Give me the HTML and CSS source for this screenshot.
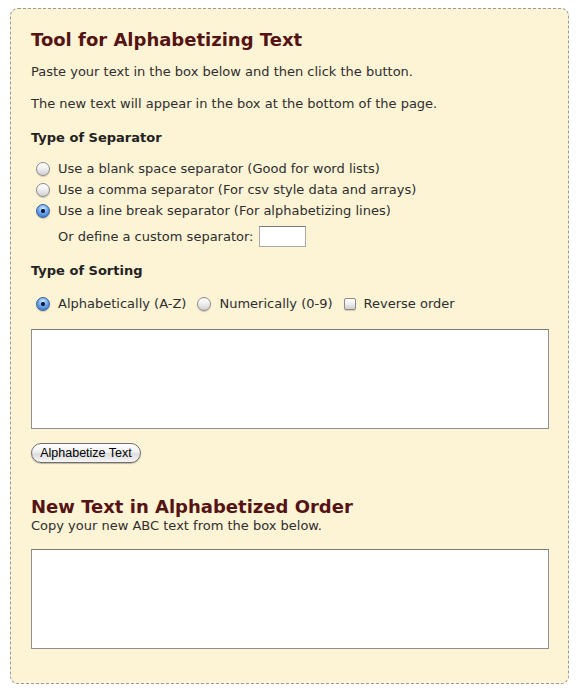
FILE: index.html
```html
<!DOCTYPE html>
<html lang="en">
<head>
    <meta charset="UTF-8">
    <title>Tool for Alphabetizing Text</title>
    <link rel="stylesheet" href="styles.css">
</head>
<body>
    <div class="container">
        <h1>Tool for Alphabetizing Text</h1>
        <p>Paste your text in the box below and then click the button.</p>
        <p>The new text will appear in the box at the bottom of the page.</p>

        <h3 class="first">Type of Separator</h3>
        <div class="options">
            <label class="opt"><input type="radio" name="sep" value="space"> Use a blank space separator (Good for word lists)</label>
            <label class="opt"><input type="radio" name="sep" value="comma"> Use a comma separator (For csv style data and arrays)</label>
            <label class="opt"><input type="radio" name="sep" value="line" checked> Use a line break separator (For alphabetizing lines)</label>
            <div class="custom">Or define a custom separator: <input type="text" class="sep-input"></div>
        </div>

        <h3>Type of Sorting</h3>
        <div class="sorting">
            <label class="opt"><input type="radio" name="sort" value="alpha" checked> Alphabetically (A-Z)</label>
            <label class="opt"><input type="radio" name="sort" value="num"> Numerically (0-9)</label>
            <label class="opt"><input type="checkbox" name="reverse"> Reverse order</label>
        </div>

        <textarea class="box"></textarea>
        <button type="button" class="go">Alphabetize Text</button>

        <h2>New Text in Alphabetized Order</h2>
        <p class="sub">Copy your new ABC text from the box below.</p>
        <textarea class="box"></textarea>
    </div>
</body>
</html>
```

FILE: styles.css
```css
body {
    font-family: "DejaVu Sans", Verdana, sans-serif;
    font-size: 13px;
    line-height: 16px;
    color: #2e2e2e;
    background-color: #ffffff;
    margin: 0;
    padding: 0;
}
.container {
    width: 518px;
    margin: 8px 0 0 10px;
    padding: 20px 19px 34px 20px;
    background: #fdf3d5;
    border: 1px dashed #999999;
    border-radius: 8px;
}
h1, h2 {
    font-size: 18px;
    line-height: 22px;
    color: #551414;
    margin: 0;
}
h1 {
    margin-bottom: 13px;
}
h2 {
    margin-top: 33px;
}
h3 {
    font-size: 13px;
    color: #222222;
    margin: 16px 0 17px;
}
h3.first {
    margin: 18px 0 15px;
}
p {
    margin: 0 0 16px;
}
p.sub {
    margin: 0 0 15px;
}
.options {
    display: flex;
    flex-direction: column;
    gap: 5px;
}
.opt {
    display: flex;
    align-items: center;
    gap: 5px;
}
.opt input {
    margin: 0 3px 0 5px;
}
.custom {
    margin-top: 2px;
    padding-left: 27px;
    display: flex;
    align-items: center;
    gap: 4px;
}
.sep-input {
    box-sizing: border-box;
    width: 47px;
    height: 21px;
    margin: 0 0 0 2px;
    padding: 0;
    border: 1px solid #a8a8a8;
    border-top-color: #7a7a7a;
    background: #ffffff;
}
.sorting {
    display: flex;
    align-items: center;
    gap: 6px;
    margin-bottom: 17px;
}
input[type="radio"], input[type="checkbox"] {
    appearance: none;
    box-sizing: border-box;
    width: 14px;
    height: 14px;
    border: 1px solid #8a8a8a;
    background: linear-gradient(#ffffff, #f2f2f2 40%, #cfcfcf);
    box-shadow: 0 1px 1px rgba(0, 0, 0, 0.18);
}
input[type="radio"] {
    border-radius: 50%;
}
input[type="checkbox"] {
    border-radius: 2px;
    width: 12px;
    height: 12px;
}
input[type="radio"]:checked {
    background: radial-gradient(circle at 50% 50%, #0f1f44 0 1.8px, transparent 2.4px), radial-gradient(circle at 50% 30%, #d8ecff 0, #6fa8ea 45%, #2a64c4 100%);
    border-color: #3660a4;
}
textarea.box {
    display: block;
    box-sizing: border-box;
    width: 518px;
    height: 100px;
    border: 1px solid #8f8f8f;
    border-top-color: #7a7a7a;
    padding: 2px;
    margin: 0;
    background: #ffffff;
    resize: none;
}
.go {
    display: block;
    box-sizing: border-box;
    width: 110px;
    height: 20px;
    margin-top: 14px;
    padding: 0;
    font-family: "Liberation Sans", Arial, sans-serif;
    font-size: 12.5px;
    color: #000000;
    border: 1px solid #6f6f6f;
    border-radius: 10px;
    background: linear-gradient(#ffffff, #f0f0f0 45%, #dcdcdc 55%, #f6f6f6);
    box-shadow: 0 1px 1px rgba(0, 0, 0, 0.25);
}
```
